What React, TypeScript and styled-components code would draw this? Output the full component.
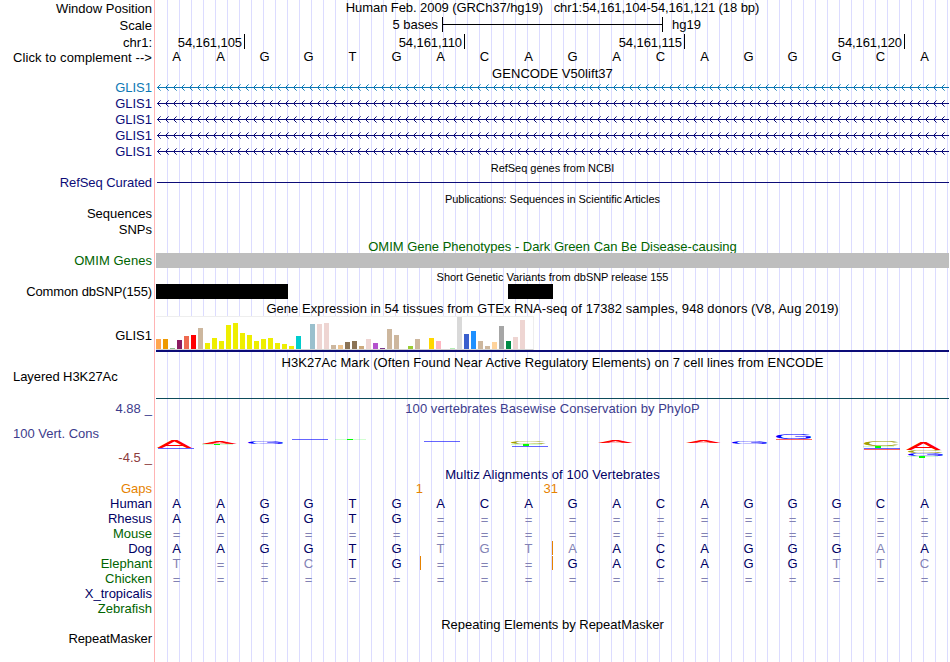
import styled, { createGlobalStyle, css } from 'styled-components';

const NAVY = '#0c0c78';

const GlobalStyle = createGlobalStyle`
  body {
    margin: 0;
    background: #fff;
  }
`;

const Browser = styled.main`
  width: 950px;
  height: 662px;
  overflow: hidden;
  color: #000;
  font: 13px/15px 'Liberation Sans', Arial, sans-serif;
  white-space: pre;
  background-image: linear-gradient(#ffb4b4, #ffb4b4),
    repeating-linear-gradient(to right, transparent 0 11px, #dcdcff 11px 12px);
  background-position: 154px 0, 156px 0;
  background-size: 1px 100%, 793px 100%;
  background-repeat: no-repeat;
`;

const Row = styled.div<{ $height: number }>`
  display: grid;
  grid-template-columns: 152px 793px;
  column-gap: 4px;
  height: ${({ $height }) => $height}px;
`;

const Label = styled.div<{ $color?: string; $drop?: number; $left?: boolean; $spacing?: number }>`
  padding-top: ${({ $drop = 0 }) => $drop}px;
  padding-left: 13px;
  color: ${({ $color = '#000' }) => $color};
  text-align: ${({ $left }) => ($left ? 'left' : 'right')};
  letter-spacing: ${({ $spacing = 0 }) => $spacing}px;
`;

const Title = styled.div<{ $color?: string; $drop?: number; $small?: boolean; $spacing?: number }>`
  grid-column: 2;
  padding-top: ${({ $drop = 0 }) => $drop}px;
  color: ${({ $color = '#000' }) => $color};
  text-align: center;
  letter-spacing: ${({ $spacing = 0 }) => $spacing}px;
  ${({ $small }) =>
    $small &&
    css`
      font-size: 11px;
    `}
`;

const ScaleBar = styled.div`
  display: grid;
  grid-template-columns: 282px 221px auto;
  column-gap: 4px;

  & span:first-child {
    text-align: right;
  }

  & span:last-child {
    padding-left: 5px;
  }
`;

const Ruler = styled.div`
  display: grid;
  grid-template-columns: 89px repeat(3, 220px);
  grid-template-rows: 15px;
`;

const Position = styled.span`
  box-sizing: border-box;
  height: 15px;
  padding: 1px 2px 0 0;
  border-right: 1px solid #000;
  letter-spacing: -0.08px;
  text-align: right;
`;

const Bases = styled.div`
  display: grid;
  grid-template-columns: repeat(18, 44px);
  height: 15px;
`;

const Base = styled.span<{ $color?: string; $insert?: boolean; $gap?: boolean }>`
  height: ${({ $insert }) => ($insert ? 14 : 15)}px;
  padding-top: ${({ $gap }) => ($gap ? 1 : 0)}px;
  padding-right: 3px;
  box-sizing: border-box;
  box-shadow: ${({ $insert }) => ($insert ? 'inset 1px 0 #e68200' : 'none')};
  color: ${({ $color = '#000' }) => $color};
  text-align: center;
`;

const GapCount = styled.span<{ $column: number; $overhang: number }>`
  grid-column: ${({ $column }) => $column};
  margin-right: ${({ $overhang }) => -$overhang}px;
  color: #e68200;
  text-align: right;
`;

const Item = styled.div<{ $color: string; $width: number; $gap?: number }>`
  width: ${({ $width }) => $width}px;
  height: 15px;
  margin-left: ${({ $gap = 0 }) => $gap}px;
  background: ${({ $color }) => $color};
`;

const Items = styled.div`
  display: flex;
`;

const Line = styled.div<{ $color: string; $drop: number; $indent?: number }>`
  height: 1px;
  margin-top: ${({ $drop }) => $drop}px;
  margin-left: ${({ $indent = 0 }) => $indent}px;
  background: ${({ $color }) => $color};
`;

const Expression = styled.div`
  height: 34px;
  border-bottom: 2px solid ${NAVY};
`;

const BarBox = styled.div`
  display: flex;
  align-items: flex-end;
  gap: 2px;
  box-sizing: border-box;
  width: 378px;
  height: 34px;
  border: solid #eee;
  border-width: 1px 1px 1px 0;
  border-bottom-color: #d2d2d2;
  background: #fff;
`;

const Bar = styled.div<{ $color: string; $height: number }>`
  flex: none;
  width: 5px;
  height: ${({ $height }) => $height}px;
  background: ${({ $color }) => $color};
`;

const Limits = styled.div`
  display: flex;
  flex-direction: column;
  justify-content: space-between;
  height: 64px;
`;

const Limit = styled.div<{ $color: string }>`
  display: flex;
  justify-content: flex-end;
  gap: 4px;
  color: ${({ $color }) => $color};
`;

const genes = [
  { name: 'GLIS1', color: '#0c78b4' },
  { name: 'GLIS1', color: NAVY },
  { name: 'GLIS1', color: NAVY },
  { name: 'GLIS1', color: NAVY },
  { name: 'GLIS1', color: NAVY },
];

const sequence = 'AAGGTGACAGACAGGGCA';

// lower case bases differ from the human sequence
const species = [
  { name: 'Human', color: '#000064', bases: sequence },
  { name: 'Rhesus', color: '#000064', bases: 'AAGGTG============' },
  { name: 'Mouse', color: '#006400', bases: '==================' },
  { name: 'Dog', color: '#000064', bases: 'AAGGTGtgtaACAGGGaA', inserts: [9] },
  { name: 'Elephant', color: '#006400', bases: 't==cTG===GACAGGttc', inserts: [6, 9] },
  { name: 'Chicken', color: '#006400', bases: '==================' },
  { name: 'X_tropicalis', color: '#000064', bases: '' },
  { name: 'Zebrafish', color: '#006400', bases: '' },
];

const tissues: [number, string][] = [
  [10, '#ffa54f'], [10, '#ee9a00'], [1, '#8fbc8f'], [9, '#8b1c62'], [13, '#ee6a50'], [14, '#ff0000'],
  [21, '#cdb79e'], [6, '#eeee00'], [11, '#eeee00'], [8, '#eeee00'], [24, '#eeee00'], [26, '#eeee00'],
  [16, '#eeee00'], [14, '#eeee00'], [8, '#eeee00'], [10, '#eeee00'], [11, '#eeee00'], [6, '#eeee00'],
  [5, '#eeee00'], [3, '#eeee00'], [13, '#00cdcd'], [0, '#ee82ee'], [25, '#9ac0cd'], [25, '#eed5d2'],
  [26, '#eed5d2'], [4, '#cdb79e'], [4, '#eec591'], [7, '#8b7355'], [8, '#8b7355'], [3, '#cdaa7d'],
  [10, '#eed5d2'], [6, '#b452cd'], [1, '#7a378b'], [20, '#cdb79e'], [14, '#cdb79e'], [0, '#cdb79e'],
  [3, '#9acd32'], [10, '#cdb79e'], [0, '#7a67ee'], [11, '#ffd700'], [8, '#ffb6c1'], [0, '#cd9b1d'],
  [1, '#b4eeb4'], [32, '#d9d9d9'], [15, '#3a5fcd'], [18, '#1e90ff'], [8, '#cdb79e'], [3, '#cdb79e'],
  [7, '#ffd39b'], [23, '#a6a6a6'], [8, '#008b45'], [12, '#eed5d2'], [29, '#eed5d2'],
];

// left bearing and ink width at a font size of 100
const glyphs = {
  A: { color: '#ff0000', bearing: 0, ink: 66.7 },
  C: { color: '#a0a000', bearing: 5, ink: 64 },
  G: { color: '#0000ff', bearing: 5, ink: 66 },
};

type LogoLetter = { base: keyof typeof glyphs; x: number; y: number; height: number };

// y is the bottom of the letter
const logo: LogoLetter[] = [
  { base: 'A', x: 1, y: 32, height: 7 },
  { base: 'A', x: 46, y: 28, height: 2.4 },
  { base: 'G', x: 92, y: 28, height: 3 },
  { base: 'C', x: 355, y: 28, height: 3 },
  { base: 'A', x: 442, y: 27, height: 1.8 },
  { base: 'A', x: 530, y: 27, height: 1.8 },
  { base: 'G', x: 576, y: 28, height: 3 },
  { base: 'G', x: 620, y: 23, height: 5 },
  { base: 'C', x: 708, y: 30, height: 5 },
  { base: 'A', x: 750, y: 34, height: 8 },
  { base: 'C', x: 752, y: 37, height: 3 },
  { base: 'G', x: 752, y: 40, height: 3 },
];

const hairlines: [number, number, string][] = [
  [2, 32, '#0000ff'],
  [136, 23, '#0000ff'],
  [268, 25, '#0000ff'],
  [356, 30, '#0000ff'],
  [620, 23, '#ff0000'],
  [708, 32, '#0000ff'],
  [708, 33, '#ff0000'],
];

// [x, y, height] of the stems of flattened T letters
const stems: [number, number, number][] = [
  [58, 28, 1],
  [191, 23, 1],
  [367, 28, 2],
  [719, 30, 2],
  [763, 40, 2],
];

function Strand({ color }: { color: string }) {
  const arrows = Array.from({ length: 99 }, (_, i) => 1 + i * 8);

  return (
    <svg width="793" height="16" shapeRendering="crispEdges">
      <path d="M1 7.5H793" stroke={color} />
      {arrows.map((x) => (
        <g key={x} fill={color}>
          <path d={`M${x + 1} 6h1v3h-1zM${x + 2} 5h1v1h-1zM${x + 2} 9h1v1h-1z`} />
          <path d={`M${x + 3} 4h1v1h-1zM${x + 3} 10h1v1h-1z`} opacity="0.6" />
        </g>
      ))}
    </svg>
  );
}

function ConservationLogo() {
  return (
    <svg width="793" height="50" fontFamily="'Liberation Sans', Arial, sans-serif" fontSize="100">
      {logo.map(({ base, x, y, height }) => {
        const { color, bearing, ink } = glyphs[base];
        const stretch = 35 / ink;
        return (
          <text
            key={`${x}-${y}`}
            fill={color}
            transform={`translate(${x - bearing * stretch} ${y}) scale(${stretch} ${height / 70})`}
          >
            {base}
          </text>
        );
      })}
      {hairlines.map(([x, y, color]) => (
        <path key={`${x}-${y}`} d={`M${x} ${y + 0.5}h36`} stroke={color} opacity="0.6" />
      ))}
      {stems.map(([x, y, height]) => (
        <g key={x} fill="#00ff00">
          <rect x={x} y={y} width="6" height={height} />
          <rect x={x - 12} y={y} width="31" height="1" opacity="0.18" />
        </g>
      ))}
    </svg>
  );
}

function Sequence({ bases, inserts = [] }: { bases: string; inserts?: number[] }) {
  return (
    <Bases>
      {[...bases].map((base, i) => {
        const mismatch = base === '=' || base !== base.toUpperCase();
        return (
          <Base key={i} $color={mismatch ? '#8282b4' : '#000064'} $insert={inserts.includes(i)} $gap={base === '='}>
            {base.toUpperCase()}
          </Base>
        );
      })}
    </Bases>
  );
}

export default function App() {
  return (
    <Browser>
      <GlobalStyle />
      <Row $height={17}>
        <Label $drop={1}>Window Position</Label>
        <Title $spacing={-0.075}>Human Feb. 2009 (GRCh37/hg19)   chr1:54,161,104-54,161,121 (18 bp)</Title>
      </Row>
      <Row $height={17}>
        <Label $drop={1}>Scale</Label>
        <ScaleBar>
          <span>5 bases</span>
          <svg width="221" height="15" shapeRendering="crispEdges">
            <path d="M.5 0V15M220.5 0V15M0 7.5H221" stroke="#000" />
          </svg>
          <span>hg19</span>
        </ScaleBar>
      </Row>
      <Row $height={15}>
        <Label $drop={1}>chr1:</Label>
        <Ruler>
          {['54,161,105', '54,161,110', '54,161,115', '54,161,120'].map((position) => (
            <Position key={position}>{position}</Position>
          ))}
        </Ruler>
      </Row>
      <Row $height={16}>
        <Label $drop={1} $spacing={0.09}>{'Click to complement -->'}</Label>
        <Bases>
          {[...sequence].map((base, i) => (
            <Base key={i}>{base}</Base>
          ))}
        </Bases>
      </Row>

      <Row $height={15}>
        <Title $drop={1} $spacing={0.05}>GENCODE V50lift37</Title>
      </Row>
      {genes.map(({ name, color }, i) => (
        <Row key={i} $height={16}>
          <Label $color={color}>{name}</Label>
          <Strand color={color} />
        </Row>
      ))}

      <Row $height={15}>
        <Title $small $drop={1} $spacing={-0.03}>RefSeq genes from NCBI</Title>
      </Row>
      <Row $height={16}>
        <Label $color={NAVY} $spacing={-0.07}>RefSeq Curated</Label>
        <Line $color={NAVY} $drop={7} $indent={1} />
      </Row>

      <Row $height={15}>
        <Title $small $drop={1} $spacing={-0.06}>Publications: Sequences in Scientific Articles</Title>
      </Row>
      <Row $height={16}>
        <Label>Sequences</Label>
      </Row>
      <Row $height={16}>
        <Label>SNPs</Label>
      </Row>

      <Row $height={15}>
        <Title $color="#006400" $drop={1}>OMIM Gene Phenotypes - Dark Green Can Be Disease-causing</Title>
      </Row>
      <Row $height={16}>
        <Label $color="#006400" $spacing={0.05}>OMIM Genes</Label>
        <Items>
          <Item $color="#bebebe" $width={793} />
        </Items>
      </Row>

      <Row $height={15}>
        <Title $small $drop={1} $spacing={-0.03}>Short Genetic Variants from dbSNP release 155</Title>
      </Row>
      <Row $height={16}>
        <Label $spacing={-0.12}>Common dbSNP(155)</Label>
        <Items>
          <Item $color="#000" $width={132} />
          <Item $color="#000" $width={45} $gap={220} />
        </Items>
      </Row>

      <Row $height={16}>
        <Title $drop={1} $spacing={0.055}>
          Gene Expression in 54 tissues from GTEx RNA-seq of 17382 samples, 948 donors (V8, Aug 2019)
        </Title>
      </Row>
      <Row $height={38}>
        <Label $drop={12}>GLIS1</Label>
        <Expression>
          <BarBox>
            {tissues.map(([height, color], i) => (
              <Bar key={i} $height={height} $color={color} />
            ))}
          </BarBox>
        </Expression>
      </Row>

      <Row $height={15}>
        <Title $drop={1} $spacing={0.05}>
          H3K27Ac Mark (Often Found Near Active Regulatory Elements) on 7 cell lines from ENCODE
        </Title>
      </Row>
      <Row $height={32}>
        <Label $left $spacing={-0.06}>Layered H3K27Ac</Label>
        <Line $color="#0c4b5a" $drop={29} />
      </Row>

      <Row $height={65}>
        <Limits>
          <Limit $color="#3c3c8c">
            <span>4.88</span>
            <span>_</span>
          </Limit>
          <Label $left $color="#3c3c8c">100 Vert. Cons</Label>
          <Limit $color="#8c3c3c">
            <span>-4.5</span>
            <span>_</span>
          </Limit>
        </Limits>
        <div>
          <Title $color="#3c3c8c" $spacing={0.05}>100 vertebrates Basewise Conservation by PhyloP</Title>
          <ConservationLogo />
        </div>
      </Row>

      <Row $height={15}>
        <Title $color="#000064" $drop={1} $spacing={0.1}>Multiz Alignments of 100 Vertebrates</Title>
      </Row>
      <Row $height={15}>
        <Label $color="#e68200">Gaps</Label>
        <Bases>
          <GapCount $column={6} $overhang={3}>1</GapCount>
          <GapCount $column={9} $overhang={6}>31</GapCount>
        </Bases>
      </Row>
      {species.map(({ name, color, bases, inserts }) => (
        <Row key={name} $height={15}>
          <Label $color={color}>{name}</Label>
          <Sequence bases={bases} inserts={inserts} />
        </Row>
      ))}

      <Row $height={15}>
        <Title $drop={1}>Repeating Elements by RepeatMasker</Title>
      </Row>
      <Row $height={31}>
        <Label $spacing={-0.08}>RepeatMasker</Label>
      </Row>
    </Browser>
  );
}
